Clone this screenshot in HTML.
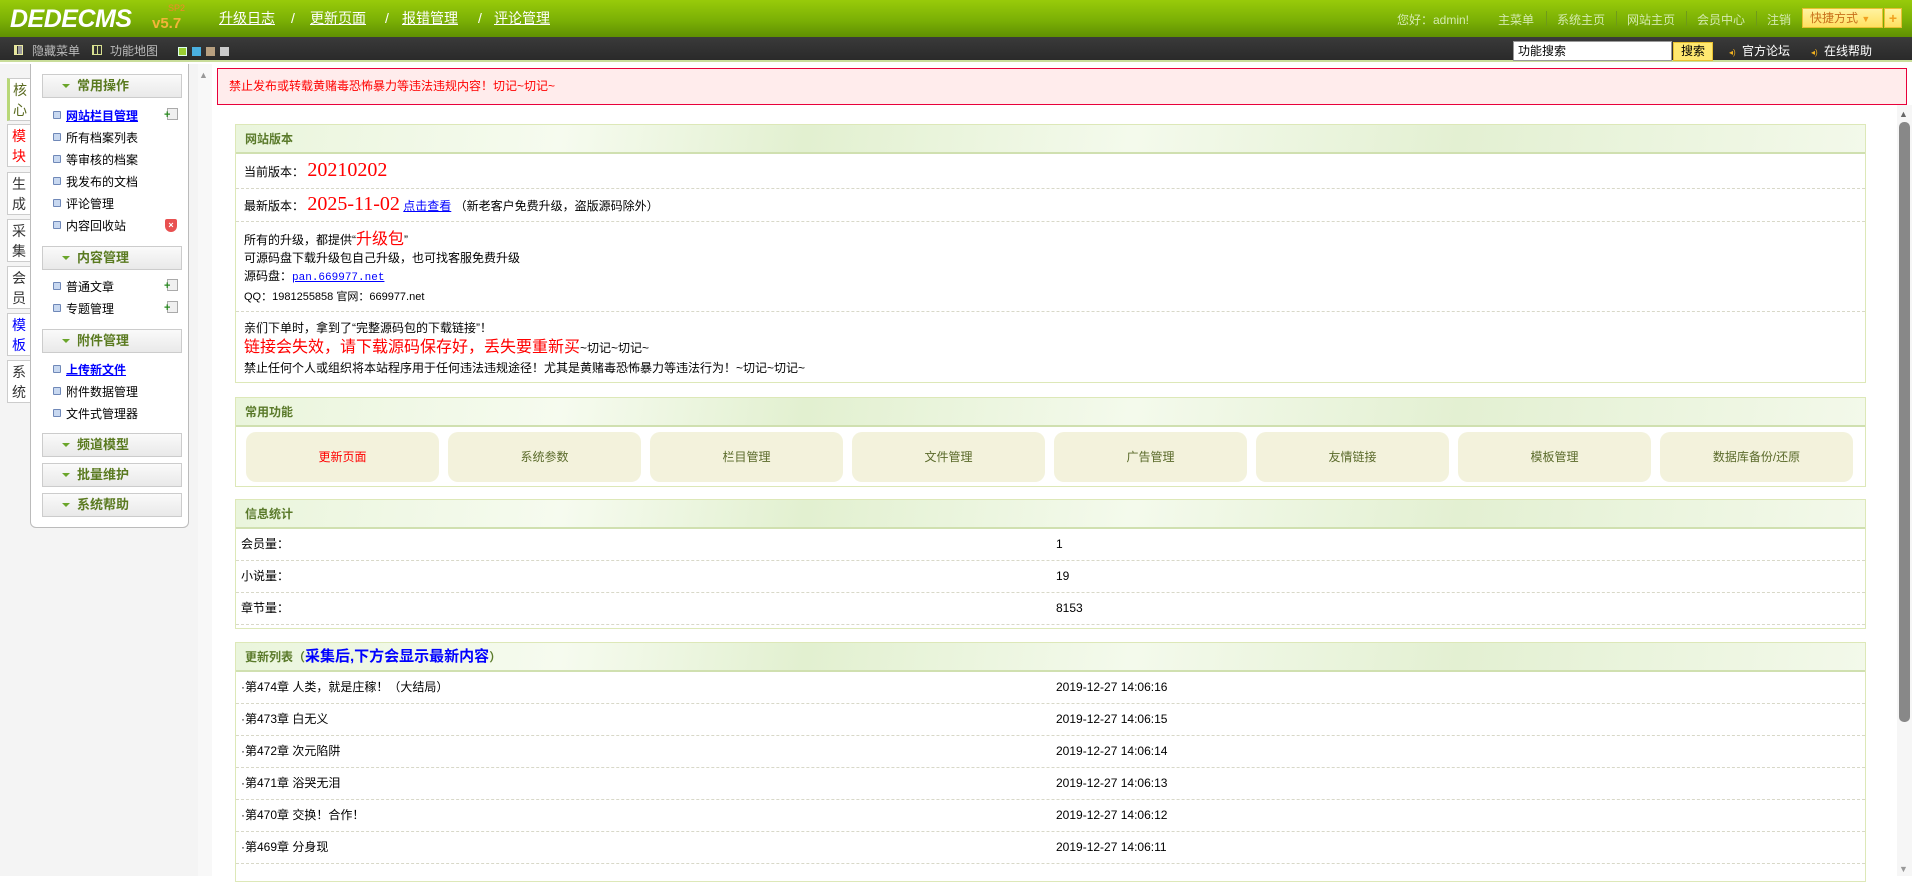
<!DOCTYPE html>
<html><head><meta charset="utf-8">
<style>
*{margin:0;padding:0;box-sizing:border-box}
body{width:1912px;height:876px;overflow:hidden;background:#fff;font-family:"Liberation Sans","Noto Sans CJK SC",sans-serif;font-size:12px;line-height:14px;color:#000;position:relative}
.abs{position:absolute}
#top{left:0;top:0;width:1912px;height:37px;background:linear-gradient(#98cb0a,#7bb005 55%,#5f8f02)}
#bar{left:0;top:37px;width:1912px;height:25px;background:linear-gradient(#3a3a3a,#2a2a2a);border-bottom:2px solid #c9dd9a}
.logo{left:10px;top:5px;font:italic 900 25px/28px "Liberation Sans",sans-serif;color:#fff;letter-spacing:-0.5px}
.ver{left:152px;top:15px;font:bold 15px/17px "Liberation Sans",sans-serif;color:#f3b43a}
.sp2{left:168px;top:3px;font:9px/10px "Liberation Sans",sans-serif;color:#f08a2a}
.nav{top:10px;font-size:14px;line-height:16px;color:#fff;text-decoration:underline}
.sl{top:10px;font-size:14px;line-height:16px;color:#fff}
.rl{top:13px;font-size:12px;color:#d5eab0}
.rs{top:11px;width:1px;height:15px;background:#6f9a1a}
.bt{top:44px;font-size:12px;color:#bbb}
.sq{top:47px;width:9px;height:9px}
#left{left:0;top:64px;width:212px;height:812px;background:#f4f4f4}
.tab{left:7px;width:23px;height:43px;background:#fff;border:1px solid #ccc;border-right:none;font-size:14px;line-height:20px;text-align:center;padding-top:1px;color:#333}
#box{left:30px;top:64px;width:159px;height:464px;background:#fff;border:1px solid #bbb;border-top:none;border-radius:0 0 6px 6px}
.mh{left:42px;width:140px;height:24px;background:linear-gradient(#fafafa,#e9e9e9);border:1px solid #ccc;font-weight:bold;font-size:13px;color:#5a7a20;line-height:22px;padding-left:34px}
.mh:before{content:"";position:absolute;left:19px;top:9px;border:4px solid transparent;border-top:4px solid #6aa52a}
.it{left:53px;font-size:12px;line-height:14px}
.it:before{content:"";display:inline-block;width:6px;height:6px;border:1px solid #6f88b8;background:#c8d8f0;border-radius:1px;margin-right:5px;vertical-align:1px}
.it a{color:#00f;font-weight:bold;text-decoration:underline}
.add{left:167px;width:11px;height:12px;border:1px solid #aaa;background:#f0f0f0}
.add:after{content:"+";position:absolute;left:-4px;top:1px;color:#2a8a20;font:bold 11px/11px sans-serif}
#warn{left:217px;top:68px;width:1690px;height:37px;background:#ffecec;border:1px solid #e8003a;color:#f00;font-size:12px;line-height:35px;padding-left:11px}
.panel{left:235px;width:1631px;border:1px solid #dde8b8;background:#fff}
.ph{height:29px;background:linear-gradient(100deg,#eaf5dc 0%,#f6fbef 20%,#e2f0d0 35%,#f4faec 55%,#e3f0d2 75%,#f3f9ea 100%);border-bottom:2px solid #d0e0b0;font-weight:bold;color:#5a7a2a;font-size:12px;line-height:28px;padding-left:9px}
.row{border-bottom:1px dashed #d8d8c8;padding-left:8px;position:relative}
.red{color:#f00}
.big{font-family:"Liberation Serif",serif;font-size:20px;color:#f00}
.btn{position:absolute;top:34px;width:193px;height:50px;background:#f3f2dc;border-radius:10px;text-align:center;line-height:50px;color:#5a6a2a;font-size:12px}
.sr{height:32px;line-height:31px;border-bottom:1px dashed #d8d8c8;position:relative;padding-left:5px}
.sr span{position:absolute;left:820px;top:0}
#sb{left:1897px;top:105px;width:15px;height:771px;background:#f6f6f6}
</style></head><body>
<div id="top" class="abs"></div>
<div class="abs logo">DEDECMS</div>
<div class="abs sp2">SP2</div>
<div class="abs ver">v5.7</div>
<div class="abs nav" style="left:219px">升级日志</div>
<div class="abs sl" style="left:291px">/</div>
<div class="abs nav" style="left:310px">更新页面</div>
<div class="abs sl" style="left:385px">/</div>
<div class="abs nav" style="left:402px">报错管理</div>
<div class="abs sl" style="left:478px">/</div>
<div class="abs nav" style="left:494px">评论管理</div>
<div class="abs rl" style="left:1397px">您好：admin!</div>
<div class="abs rl" style="left:1498px">主菜单</div><div class="abs rs" style="left:1546px"></div>
<div class="abs rl" style="left:1557px">系统主页</div><div class="abs rs" style="left:1616px"></div>
<div class="abs rl" style="left:1627px">网站主页</div><div class="abs rs" style="left:1686px"></div>
<div class="abs rl" style="left:1697px">会员中心</div><div class="abs rs" style="left:1756px"></div>
<div class="abs rl" style="left:1767px">注销</div>
<div class="abs" style="left:1802px;top:8px;width:81px;height:20px;background:linear-gradient(#fff3a0,#ffe060);border:1px solid #e8c030;color:#c8701a;font-size:12px;line-height:18px;padding-left:7px">快捷方式 <span style="color:#f0a020;font-size:9px">▼</span></div>
<div class="abs" style="left:1884px;top:8px;width:18px;height:20px;background:linear-gradient(#fff3a0,#ffe060);border:1px solid #e8c030;color:#f0a020;font:bold 14px/18px sans-serif;text-align:center">+</div>

<div id="bar" class="abs"></div>
<div class="abs" style="left:14px;top:45px;width:9px;height:10px;border:1px solid #e8e8a0;background:linear-gradient(90deg,#e8e8a0 30%,#333 30%,#333 45%,#999 45%)"></div>
<div class="abs bt" style="left:32px">隐藏菜单</div>
<div class="abs" style="left:92px;top:45px;width:10px;height:10px;border:1px solid #d8e090;background:repeating-linear-gradient(90deg,#d8e090 0 1px,#333 1px 4px)"></div>
<div class="abs bt" style="left:110px">功能地图</div>
<div class="abs sq" style="left:178px;background:#9acd32;border:1px solid #dfe"></div>
<div class="abs sq" style="left:192px;background:#4ab0e0"></div>
<div class="abs sq" style="left:206px;background:#b8a080"></div>
<div class="abs sq" style="left:220px;background:#ccc"></div>
<div class="abs" style="left:1513px;top:41px;width:159px;height:20px;background:#fff;border:1px solid #999;font-size:12px;line-height:18px;padding-left:4px">功能搜索</div>
<div class="abs" style="left:1673px;top:42px;width:40px;height:19px;background:#ffe870;border:1px solid #e8c030;font-size:12px;line-height:17px;text-align:center">搜索</div>
<div class="abs" style="left:1729px;top:46px;color:#f0b020;font-size:8px">◂)</div>
<div class="abs" style="left:1742px;top:44px;color:#fff;font-size:12px">官方论坛</div>
<div class="abs" style="left:1811px;top:46px;color:#f0b020;font-size:8px">◂)</div>
<div class="abs" style="left:1824px;top:44px;color:#fff;font-size:12px">在线帮助</div>

<div id="left" class="abs"></div>
<div class="abs" style="left:198px;top:64px;width:14px;height:812px;background:#f8f8f8"></div>
<div class="abs" style="left:199px;top:68px;font-size:9px;color:#999">▲</div>
<div class="abs tab" style="top:78px;border-left:3px solid #b8d878;color:#5a6a20">核<br>心</div>
<div class="abs tab" style="top:124px;color:#f00">模<br>块</div>
<div class="abs tab" style="top:172px">生<br>成</div>
<div class="abs tab" style="top:219px">采<br>集</div>
<div class="abs tab" style="top:266px">会<br>员</div>
<div class="abs tab" style="top:313px;color:#00f">模<br>板</div>
<div class="abs tab" style="top:360px">系<br>统</div>

<div id="box" class="abs"></div>
<div class="abs mh" style="top:74px">常用操作</div>
<div class="abs it" style="top:109px"><a>网站栏目管理</a></div><div class="abs add" style="top:108px"></div>
<div class="abs it" style="top:131px">所有档案列表</div>
<div class="abs it" style="top:153px">等审核的档案</div>
<div class="abs it" style="top:175px">我发布的文档</div>
<div class="abs it" style="top:197px">评论管理</div>
<div class="abs it" style="top:219px">内容回收站</div>
<div class="abs" style="left:165px;top:219px;width:12px;height:13px;background:#e85050;border-radius:2px 2px 6px 6px;color:#fff;font:bold 9px/13px sans-serif;text-align:center">×</div>
<div class="abs mh" style="top:246px">内容管理</div>
<div class="abs it" style="top:280px">普通文章</div><div class="abs add" style="top:279px"></div>
<div class="abs it" style="top:302px">专题管理</div><div class="abs add" style="top:301px"></div>
<div class="abs mh" style="top:329px">附件管理</div>
<div class="abs it" style="top:363px"><a>上传新文件</a></div>
<div class="abs it" style="top:385px">附件数据管理</div>
<div class="abs it" style="top:407px">文件式管理器</div>
<div class="abs mh" style="top:433px">频道模型</div>
<div class="abs mh" style="top:463px">批量维护</div>
<div class="abs mh" style="top:493px">系统帮助</div>

<div id="warn" class="abs">禁止发布或转载黄赌毒恐怖暴力等违法违规内容！切记~切记~</div>

<div class="abs panel" style="top:124px;height:259px">
 <div class="ph">网站版本</div>
 <div class="row" style="height:35px;line-height:33px">当前版本：&nbsp;<span class="big">20210202</span></div>
 <div class="row" style="height:33px;line-height:31px">最新版本：&nbsp;<span class="big">2025-11-02</span> <a style="color:#00f;text-decoration:underline">点击查看</a> （新老客户免费升级，盗版源码除外）</div>
 <div class="row" style="height:90px;line-height:18px;padding-top:9px">所有的升级，都提供“<span class="red" style="font-size:16px">升级包</span>”<br>可源码盘下载升级包自己升级，也可找客服免费升级<br>源码盘：<a style="color:#00f;text-decoration:underline;font-family:'Liberation Mono',monospace;font-size:11px">pan.669977.net</a><br><span style="font-size:11px">QQ：1981255858 官网：669977.net</span></div>
 <div style="padding:6px 8px;line-height:20px">亲们下单时，拿到了“完整源码包的下载链接”！<br><span class="red" style="font-size:16px">链接会失效，请下载源码保存好，丢失要重新买</span>~切记~切记~<br>禁止任何个人或组织将本站程序用于任何违法违规途径！尤其是黄赌毒恐怖暴力等违法行为！~切记~切记~</div>
</div>

<div class="abs panel" style="top:397px;height:90px">
 <div class="ph">常用功能</div>
 <div class="btn" style="left:10px;color:#f00">更新页面</div>
 <div class="btn" style="left:212px">系统参数</div>
 <div class="btn" style="left:414px">栏目管理</div>
 <div class="btn" style="left:616px">文件管理</div>
 <div class="btn" style="left:818px">广告管理</div>
 <div class="btn" style="left:1020px">友情链接</div>
 <div class="btn" style="left:1222px">模板管理</div>
 <div class="btn" style="left:1424px">数据库备份/还原</div>
</div>

<div class="abs panel" style="top:499px;height:130px">
 <div class="ph">信息统计</div>
 <div class="sr">会员量：<span>1</span></div>
 <div class="sr">小说量：<span>19</span></div>
 <div class="sr">章节量：<span>8153</span></div>
</div>

<div class="abs panel" style="top:642px;height:240px">
 <div class="ph">更新列表（<span style="color:#00f;font-size:15px">采集后,下方会显示最新内容</span>）</div>
 <div class="sr">·第474章 人类，就是庄稼！（大结局）<span>2019-12-27 14:06:16</span></div>
 <div class="sr">·第473章 白无义<span>2019-12-27 14:06:15</span></div>
 <div class="sr">·第472章 次元陷阱<span>2019-12-27 14:06:14</span></div>
 <div class="sr">·第471章 浴哭无泪<span>2019-12-27 14:06:13</span></div>
 <div class="sr">·第470章 交换！合作！<span>2019-12-27 14:06:12</span></div>
 <div class="sr">·第469章 分身现<span>2019-12-27 14:06:11</span></div>
</div>

<div id="sb" class="abs"></div>
<div class="abs" style="left:1899px;top:107px;font-size:9px;color:#666">▲</div>
<div class="abs" style="left:1899px;top:122px;width:11px;height:600px;background:#888;border-radius:5px"></div>
<div class="abs" style="left:1899px;top:862px;font-size:9px;color:#999">▼</div>
</body></html>
